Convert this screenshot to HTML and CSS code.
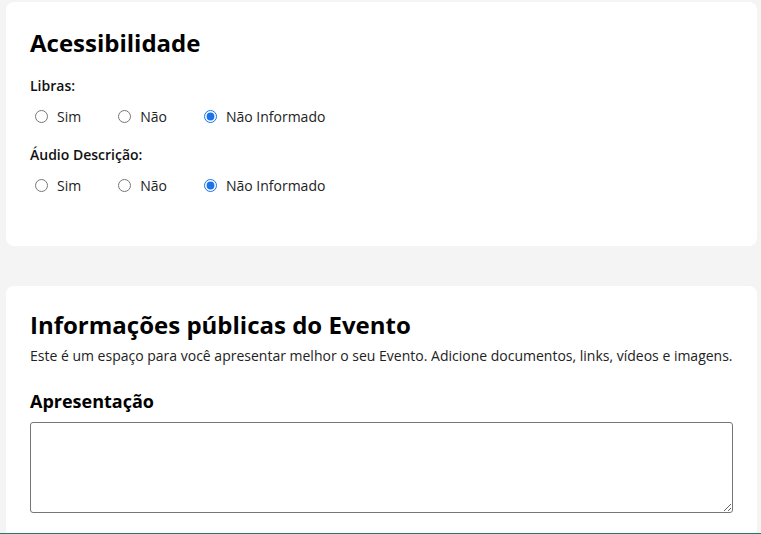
FILE: index.html
```html
<!DOCTYPE html>
<html lang="pt-BR">
<head>
<meta charset="utf-8">
<link rel="stylesheet" href="styles.css">
<title>Evento</title>
</head>
<body>
<main class="page">
  <section class="card card-access">
    <h2 class="card-title">Acessibilidade</h2>
    <div class="field">
      <div class="field-label">Libras:</div>
      <div class="options">
        <label class="option"><input type="radio" name="libras"><span>Sim</span></label>
        <label class="option"><input type="radio" name="libras"><span>Não</span></label>
        <label class="option"><input type="radio" name="libras" checked><span>Não Informado</span></label>
      </div>
    </div>
    <div class="field">
      <div class="field-label">Áudio Descrição:</div>
      <div class="options">
        <label class="option"><input type="radio" name="audio"><span>Sim</span></label>
        <label class="option"><input type="radio" name="audio"><span>Não</span></label>
        <label class="option"><input type="radio" name="audio" checked><span>Não Informado</span></label>
      </div>
    </div>
  </section>
  <section class="card card-info">
    <h2 class="card-title">Informações públicas do Evento</h2>
    <p class="card-desc">Este é um espaço para você apresentar melhor o seu Evento. Adicione documentos, links, vídeos e imagens.</p>
    <h3 class="sub-title">Apresentação</h3>
    <textarea class="text-input"></textarea>
  </section>
</main>
<div class="footer-bar"></div>
</body>
</html>
```
FILE: styles.css
```css
html, body {
  margin: 0;
  padding: 0;
}
body {
  background: #f4f4f4;
  font-family: "Open Sans", "Noto Sans", sans-serif;
  color: #1f1f1f;
  overflow: hidden;
  height: 534px;
}
.page {
  display: flex;
  flex-direction: column;
  gap: 40px;
  padding: 2px 4px 0 6px;
}
.card {
  background: #fff;
  border-radius: 8px;
  padding: 26px 24px 24px;
}
.card-access {
  height: 244px;
  box-sizing: border-box;
}
.card-title {
  margin: 0;
  font-size: 24px;
  line-height: 29px;
  font-weight: 700;
  color: #000;
}
.field {
  margin-top: 18px;
}
.field + .field {
  margin-top: 17px;
}
.field-label {
  font-size: 14px;
  line-height: 21px;
  font-weight: 600;
  color: #111;
}
.options {
  display: flex;
  gap: 32px;
  margin-top: 10px;
  font-size: 14px;
  line-height: 21px;
  color: #222;
}
.option {
  display: flex;
  align-items: center;
}
.option input {
  width: 13px;
  height: 13px;
  margin: 0 9px 0 5px;
  accent-color: #1a73e8;
}
.card-info {
  padding-top: 24px;
}
.card-desc {
  margin: 6px 0 0;
  font-size: 14px;
  line-height: 21px;
  color: #222;
}
.sub-title {
  margin: 23px 0 0;
  font-size: 18px;
  line-height: 25px;
  font-weight: 700;
  color: #000;
}
.text-input {
  display: block;
  box-sizing: border-box;
  width: 100%;
  height: 91px;
  margin-top: 8px;
  border: 1px solid #767676;
  border-radius: 3px;
  resize: vertical;
}
.footer-bar {
  position: fixed;
  left: 0;
  right: 0;
  bottom: 0;
  height: 1px;
  background: #2b7668;
}
```
